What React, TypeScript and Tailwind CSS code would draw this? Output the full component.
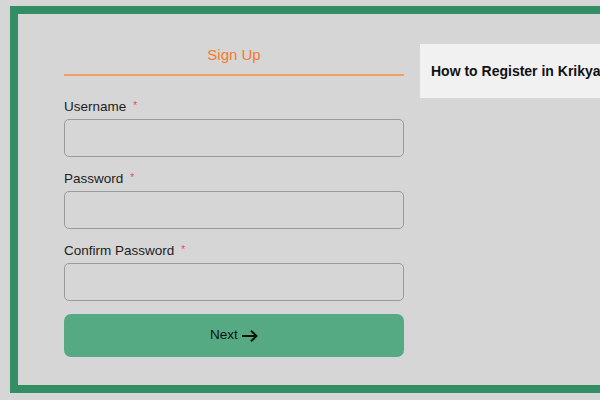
import React from 'react';

const fields = ['Username', 'Password', 'Confirm Password'];

function Field({ label }: { label: string }) {
  return (
    <div className="mt-3 first:mt-0">
      <label className="flex h-5 items-center text-[13.5px] text-[#1d1d1d]">
        {label}
        <span className="ml-[7px] -mt-[4px] text-[10px] text-[#e8484f]">*</span>
      </label>
      <input
        type={label.includes('Password') ? 'password' : 'text'}
        className="mt-[2px] block h-[38px] w-full rounded-[5px] border border-[#9a9a9a] bg-[#d6d6d6] px-3 outline-none"
      />
    </div>
  );
}

export default function App() {
  return (
    <div
      className="h-[400px] w-[600px] overflow-hidden bg-[#d6d6d6] pl-[10px] pt-[6px]"
      style={{ fontFamily: '"Liberation Sans", Arial, sans-serif' }}
    >
      <div className="flex h-[387px] w-[700px] border-8 border-[#338e66] pl-[46px]">
        <div className="w-[340px]">
          <div className="border-b-2 border-[#f0a064] pb-[7px] pt-[29px] text-center text-[15px] leading-6 text-[#f37a2c]">
            Sign Up
          </div>
          <form className="mt-[21px]" onSubmit={(e) => e.preventDefault()}>
            {fields.map((f) => (
              <Field key={f} label={f} />
            ))}
            <button className="mt-[13px] flex h-[43px] w-full items-center justify-center gap-1 rounded-[7px] bg-[#55aa84] text-[13.5px] text-[#111]">
              Next
              <svg width="16" height="12" viewBox="0 0 16 12" fill="none" stroke="#111" strokeWidth="2">
                <path d="M0 6H15" />
                <path d="M9 0.8L14.6 6L9 11.2" />
              </svg>
            </button>
          </form>
        </div>
        <div className="ml-4 mt-[30px] flex h-[54px] flex-1 items-center bg-[#f1f1f1] pl-[11px]">
          <span className="whitespace-nowrap text-[14px] font-bold text-[#111]">How to Register in Krikya</span>
        </div>
      </div>
    </div>
  );
}
